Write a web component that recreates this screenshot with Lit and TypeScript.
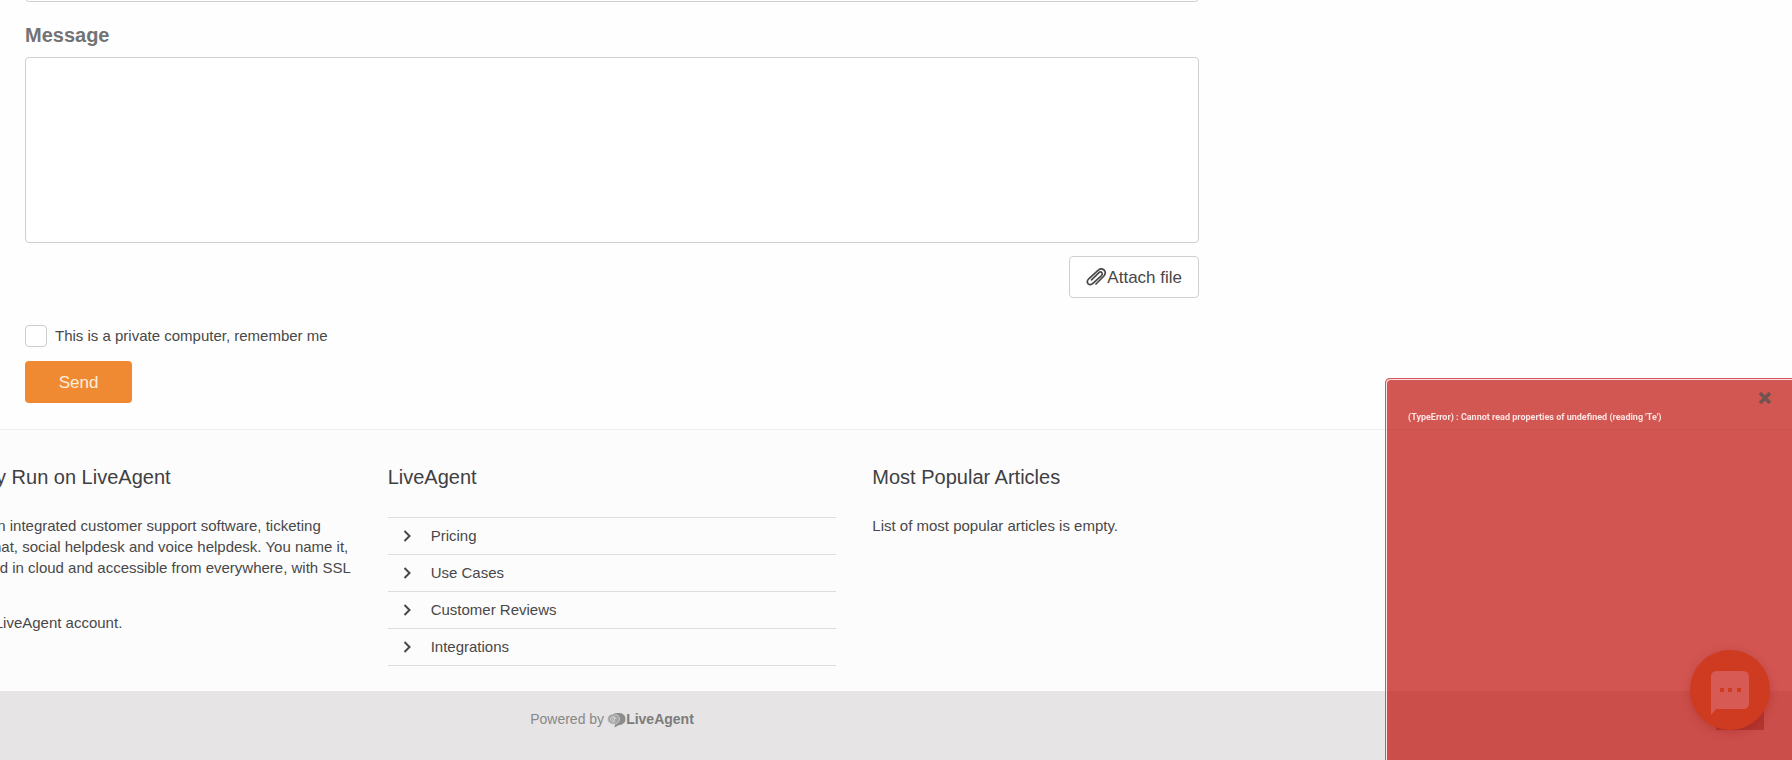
import { LitElement, html, css, svg } from "lit";
import { customElement, state } from "lit/decorators.js";

const chevron = svg`<path d="M1.500 1 L6.500 6 L1.500 11" fill="none" stroke="currentColor" stroke-width="2"/>`;

@customElement("app-root")
export class AppRoot extends LitElement {
  @state() private errorOpen = true;

  private links = ["Pricing", "Use Cases", "Customer Reviews", "Integrations"];

  static styles = css`
    :host {
      display: block;
      overflow: hidden;
      height: 100vh;
      background: #fefefe;
      color: #484848;
      font: 15px/21px "Liberation Sans", Arial, sans-serif;
    }
    * { box-sizing: border-box; }
    button, input, textarea { font: inherit; color: inherit; margin: 0; }
    /* the page is wider than the window and scrolled to its right end */
    .page {
      display: flex;
      flex-direction: column;
      min-height: 100vh;
      margin-left: -568px;
    }
    .form {
      display: flex;
      flex-direction: column;
      align-items: flex-start;
      width: 100%;
      max-width: 1174px;
      margin: -40px auto 0;
      padding-bottom: 26px;
    }
    .field {
      width: 100%;
      border: 1px solid #cfcfcf;
      border-radius: 4px;
      background: #fff;
      padding: 8px 12px;
      display: block;
      resize: none;
      outline: none;
    }
    .subject { height: 42px; }
    .message { height: 186px; }
    .label {
      font-size: 20px;
      line-height: 24px;
      font-weight: bold;
      color: #737373;
      margin: 21px 0 10px;
    }
    .attach {
      display: flex;
      align-items: center;
      align-self: flex-end;
      height: 42px;
      margin: 13px 0 27px;
      padding: 0 16px;
      border: 1px solid #d0d0d0;
      border-radius: 4px;
      background: #fff;
      font-size: 17px;
    }
    .remember { display: flex; align-items: flex-start; gap: 8px; }
    .check {
      appearance: none;
      width: 22px;
      height: 22px;
      border: 1px solid #cdcdcd;
      border-radius: 4px;
      background: #fff;
    }
    .check:checked { background: #f08a32; }
    .send {
      height: 42px;
      width: 107px;
      margin-top: 14px;
      border: 0;
      border-radius: 4px;
      background: #f08a32;
      color: #fdeedd;
      font-size: 17px;
    }
    .info {
      background: #fdfcfd;
      border-top: 1px solid #f1eff0;
      padding: 35px 0 25px;
    }
    .columns {
      display: grid;
      grid-template-columns: repeat(3, 1fr);
      gap: 36px;
      width: 100%;
      max-width: 1418px;
      margin: 0 auto;
    }
    h2 {
      margin: 0 0 26px;
      font-size: 20px;
      line-height: 24px;
      font-weight: normal;
      color: #404042;
    }
    p { margin: 0 0 34px; }
    p:last-child { margin: 0; }
    .links {
      list-style: none;
      margin: 0;
      padding: 2px 0 0;
    }
    .links li { border-bottom: 1px solid #dedddd; }
    .links li:first-child { border-top: 1px solid #dedddd; }
    .links a {
      display: flex;
      align-items: center;
      gap: 20px;
      padding: 8px 15px;
      line-height: 20px;
      color: inherit;
      text-decoration: none;
    }
    .bottom {
      flex: 1;
      display: flex;
      justify-content: center;
      align-items: flex-start;
      padding: 18px 0;
      background: #e6e4e5;
      color: #888;
      font-size: 14px;
    }
    .brand {
      display: flex;
      align-items: center;
      margin-left: 3px;
      color: #7c7c7c;
      font-weight: bold;
      text-decoration: none;
    }
    .error {
      position: fixed;
      right: 0;
      bottom: 0;
      width: 407px;
      height: 382px;
      padding: 32px 22px;
      border: 1px solid #d4575b;
      border-width: 1px 0 0 1px;
      border-radius: 5px 0 0 0;
      background: rgba(191, 14, 9, 0.7);
      box-shadow: inset 1px 1px #fae4e4;
      color: #fde3e1;
      font-family: Roboto, sans-serif;
      font-size: 9px;
      line-height: 12px;
      font-weight: bold;
    }
    .close {
      position: absolute;
      top: 12px;
      right: 20px;
      display: flex;
      padding: 0;
      border: 0;
      background: none;
      color: #6f5450;
    }
    .top {
      position: fixed;
      right: 28px;
      bottom: 30px;
      width: 48px;
      height: 48px;
      padding: 0;
      border: 0;
      background: #b5352f;
    }
    .chat {
      position: fixed;
      right: 22px;
      bottom: 30px;
      width: 80px;
      height: 80px;
      padding: 0;
      border: 0;
      border-radius: 50%;
      background: #cf3b20;
      box-shadow: 0 2px 8px rgba(150, 30, 25, 0.35);
    }
    svg { display: block; flex: none; }
  `;

  render() {
    return html`
      <div class="page">
        <form class="form" @submit=${(e: Event) => e.preventDefault()}>
          <input class="field subject" aria-label="Subject" />
          <label class="label" for="message">Message</label>
          <textarea class="field message" id="message"></textarea>
          <button class="attach" type="button">
            <svg width="21" height="18" viewBox="0 0 21 18" fill="none" stroke="currentColor" stroke-width="1.700" stroke-linecap="round">
              <path d="M10 16 L17.500 8.500 C20 6 19.500 3.300 18 2 C16.300 .5 13.800 .7 12 2.500 L3 10.500 C1 12.500 1 14.500 2.200 15.800 C3.500 17 5.500 16.800 7.200 15.200 L15.200 7.800 C16.500 6.500 16.500 5.300 15.700 4.500 C14.900 3.700 13.700 3.900 12.700 4.800 L5.500 11.800"/>
            </svg>
            Attach file
          </button>
          <label class="remember">
            <input class="check" type="checkbox" />
            This is a private computer, remember me
          </label>
          <button class="send" type="submit">Send</button>
        </form>
        <section class="info">
          <div class="columns">
            <div>
              <h2>We Proudly Run on LiveAgent</h2>
              <p>
                LiveAgent is an integrated customer support software, ticketing<br />
                system, live chat, social helpdesk and voice helpdesk. You name it,<br />
                we got it hosted in cloud and accessible from everywhere, with SSL
              </p>
              <p>Get your free LiveAgent account.</p>
            </div>
            <div>
              <h2>LiveAgent</h2>
              <ul class="links">
                ${this.links.map(
                  (text) => html`<li>
                    <a href="#"><svg width="8" height="12" viewBox="0 0 8 12">${chevron}</svg>${text}</a>
                  </li>`
                )}
              </ul>
            </div>
            <div>
              <h2>Most Popular Articles</h2>
              <div>List of most popular articles is empty.</div>
            </div>
          </div>
        </section>
        <footer class="bottom">
          Powered by
          <a class="brand" href="#">
            <svg width="19" height="16" viewBox="0 0 19 16">
              <path d="M7 1 H12 C16 1 18.500 3.500 18.500 7 C18.500 10.500 16 13 12 13 L7.500 15.500 L8 12.500 Z" fill="#8c8c8c"/>
              <ellipse cx="6.500" cy="7" rx="6" ry="5.200" fill="#a5a4a5" stroke="#e6e4e5" stroke-width=".6"/>
              <path d="M8.500 9 C6.500 11 3.500 9.600 3.500 7 C3.500 4.300 8.800 3.600 9 7 M7.500 5.800 C5.500 5 5 8.500 6.500 8.500 C7.600 8.500 7.600 7 7.600 6" fill="none" stroke="#dcdbdc" stroke-width=".9"/>
            </svg>LiveAgent
          </a>
        </footer>
      </div>
      ${this.errorOpen
        ? html`<div class="error" role="alert">
            (TypeError) : Cannot read properties of undefined (reading 'Te')
            <button class="close" aria-label="Close" @click=${() => (this.errorOpen = false)}>
              <svg width="14" height="14" viewBox="0 0 14 14" stroke="currentColor" stroke-width="3.500">
                <path d="M2 2 L12 12 M12 2 L2 12"/>
              </svg>
            </button>
          </div>`
        : null}
      <button class="top" aria-label="Back to top"></button>
      <button class="chat" aria-label="Open chat">
        <svg width="80" height="80" viewBox="0 0 80 80">
          <path d="M27 21 H53 Q59 21 59 27 V53 Q59 59 53 59 H26 L21 65 V27 Q21 21 27 21 Z" fill="#d85a54"/>
          <path d="M30 38 h4 v4 h-4z M38 38 h4 v4 h-4z M47 38 h4 v4 h-4z" fill="#cf3b20"/>
        </svg>
      </button>
    `;
  }
}
